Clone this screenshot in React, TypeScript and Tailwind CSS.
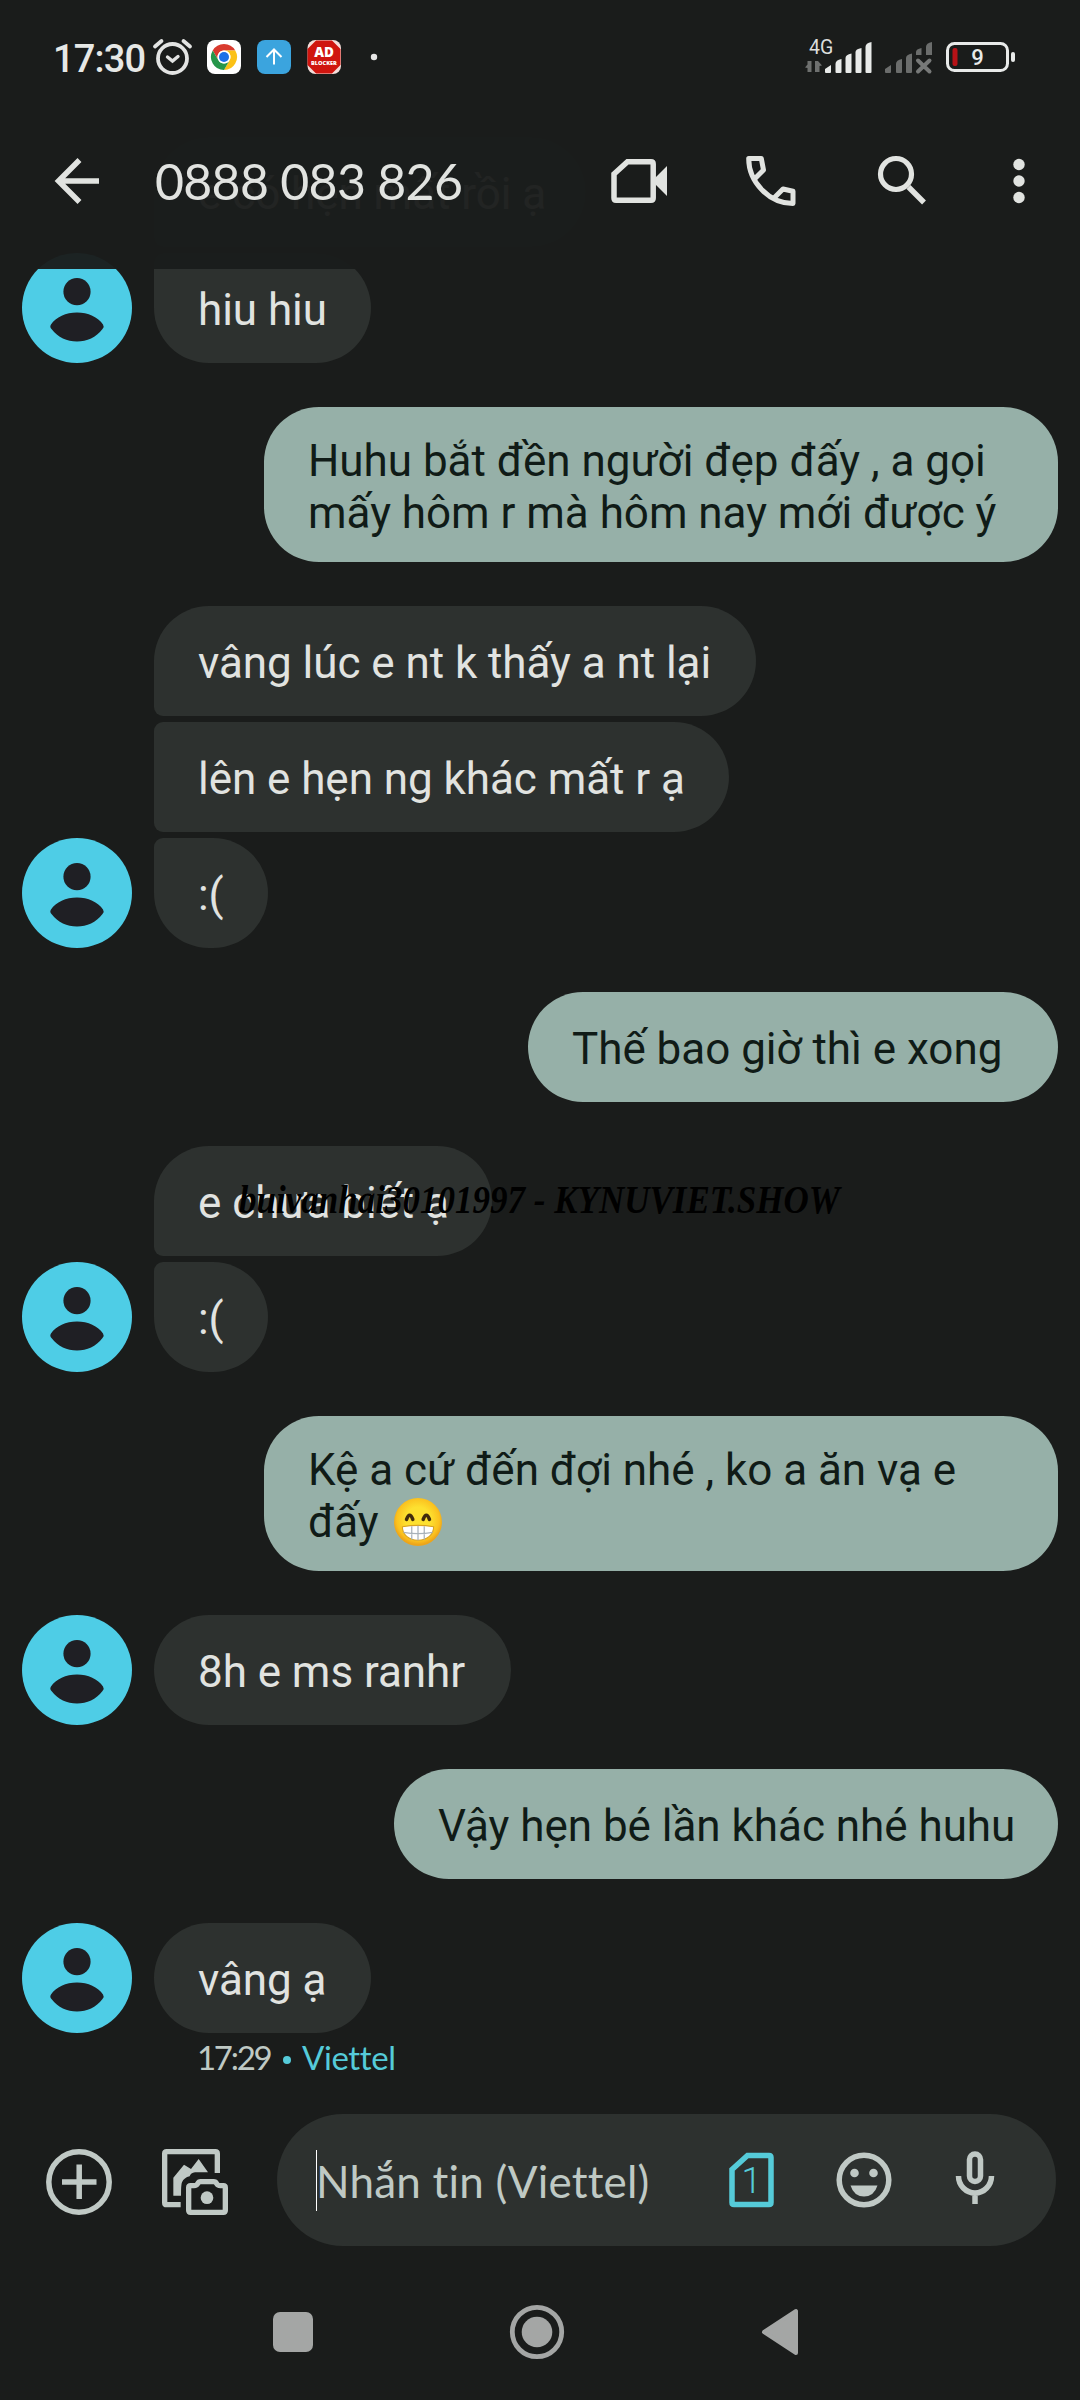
import React from "react";

type Corner = "single" | "first" | "middle" | "last";

const corners: Record<Corner, string> = {
  single: "rounded-[55px]",
  first: "rounded-[55px] rounded-bl-[9px]",
  middle: "rounded-[55px] rounded-l-[9px]",
  last: "rounded-[55px] rounded-tl-[9px]",
};

function Avatar() {
  return (
    <svg viewBox="0 0 110 110" className="size-[110px] shrink-0">
      <circle cx="55" cy="55" r="55" fill="#4ecde6" />
      <circle cx="55" cy="38.700" r="13.600" fill="#1f1f24" />
      <path
        d="M29 71.500C34 64 44 59.500 55 59.500S76 64 81 71.500Q82.600 73.800 80.500 76C74 84.500 65 88.500 55 88.500S36 84.500 29.500 76Q27.400 73.800 29 71.500Z"
        fill="#1f1f24"
      />
    </svg>
  );
}

function Received({ text, corner = "single", avatar = true, width }: { text: string; corner?: Corner; avatar?: boolean; width: string }) {
  return (
    <div className="flex h-[110px] gap-[22px] pl-[22px]">
      {avatar ? <Avatar /> : <div className="w-[110px] shrink-0" />}
      <div className={`${corners[corner]} ${width} bg-[#2d312f] pl-[44px] pt-[31px] text-[44px] leading-[52px] tracking-[-0.050px] whitespace-nowrap text-[#e1e3e0]`}>
        {text}
      </div>
    </div>
  );
}

function Sent({ children, size }: { children: React.ReactNode; size: string }) {
  return (
    <div className={`${size} ml-auto mr-[22px] rounded-[55px] bg-[#96b0a8] pl-[44px] text-[44px] leading-[52px] tracking-[-0.030px] whitespace-nowrap text-[#101b17]`}>
      {children}
    </div>
  );
}

function GrinEmoji() {
  return (
    <svg viewBox="0 0 48 48" className="ml-[3px] inline-block size-[50px] align-[-10px]">
      <defs>
        <radialGradient id="face" cx="50%" cy="45%" r="52%">
          <stop offset="0.5" stopColor="#fde030" />
          <stop offset="0.85" stopColor="#fbc21f" />
          <stop offset="1" stopColor="#eda51a" />
        </radialGradient>
      </defs>
      <circle cx="24" cy="24" r="23" fill="url(#face)" />
      <path d="M13 21.500Q16 13.500 19 21.500M29 21.500Q32 13.500 35 21.500" fill="none" stroke="#422b0d" strokeWidth="3.400" strokeLinecap="round" />
      <path d="M9 28.500Q24 26 39 28.500C39 36 33 41.500 24 41.500S9 36 9 28.500Z" fill="#fff" stroke="#d9a321" strokeWidth="1" />
      <path d="M10 34Q24 36.500 38 34M18 28V41M24 27.500V41.500M30 28V41" fill="none" stroke="#a9b2ba" strokeWidth="1.200" />
    </svg>
  );
}

function StatusBar() {
  return (
    <div className="flex h-[115px] items-start pl-[53px] pt-[30px]">
      <span className="mt-[6px] w-[92px] text-[38px] font-medium leading-[46px] tracking-[-0.800px] whitespace-nowrap text-[#e6e8e6]">17:30</span>
      <svg viewBox="0 0 240 60" className="h-[60px] w-[240px]">
        <g fill="none" stroke="#e3e4e3" strokeLinecap="round">
          <circle cx="27.500" cy="28.500" r="14.500" strokeWidth="3.800" />
          <path d="M10 16.500L16.500 11M45 16.500L38.500 11" strokeWidth="3.800" />
          <path d="M22.500 27L27.500 31L33 26.500" strokeWidth="3.400" />
        </g>
        <rect x="62" y="10" width="34" height="34" rx="8" fill="#fff" />
        <g transform="translate(79 27)">
          <path d="M-11.260 -6.500A13 13 0 0 1 11.260 -6.500H0A6.500 6.500 0 0 0 -5.630 3.250Z" fill="#d93a2e" />
          <path d="M11.260 -6.500A13 13 0 0 1 0 13L5.630 3.250A6.500 6.500 0 0 0 0 -6.500Z" fill="#fbc116" />
          <path d="M0 13A13 13 0 0 1 -11.260 -6.500L-5.630 3.250A6.500 6.500 0 0 0 5.630 3.250Z" fill="#26964a" />
          <circle r="6.400" fill="#fff" />
          <circle r="5" fill="#1b6fe8" />
        </g>
        <rect x="112" y="10" width="34" height="34" rx="8" fill="#3ba4de" />
        <path d="M129 34.500V21M121.500 27L129 19.500L136.500 27" fill="none" stroke="#fff" strokeWidth="2" />
        <rect x="162.500" y="10" width="33.500" height="34" rx="8" fill="#f3dedb" />
        <path d="M171 10.500H187L195.500 19V35L187 43.500H171L162.500 35V19Z" fill="#d0150f" />
        <circle cx="229" cy="27" r="3.200" fill="#e6e6e6" />
        <text x="179" y="26.500" textAnchor="middle" fontFamily="Open Sans" fontWeight="800" fontSize="13.500" fill="#fff">AD</text>
        <text x="179" y="34.500" textAnchor="middle" fontFamily="Open Sans" fontWeight="800" fontSize="5.600" fill="#fff">BLOCKER</text>
      </svg>
      <svg viewBox="0 0 230 60" className="ml-[410px] h-[60px] w-[230px]">
        <text x="14" y="24" fontFamily="Roboto" fontSize="19.500" fill="#dcdedc">4G</text>
        <path d="M16.500 31V42H12.500V38L10 37.500L12.500 34.500V31ZM20 42V31H23L27 35.500L24.500 36V42Z" fill="#6e706f" />
        <g fill="#e8eae9">
          <path d="M30 42V39L36 35V42Q36 43 35 43H31Q30 43 30 42Z" />
          <path d="M40.500 42V34Q40.500 30 46.500 29V42Q46.500 43 45.500 43H41.500Q40.500 43 40.500 42Z" />
          <path d="M50.500 42V28Q50.500 24.500 56.500 23.500V42Q56.500 43 55.500 43H51.500Q50.500 43 50.500 42Z" />
          <path d="M60.500 42V22Q60.500 19 66.500 18V42Q66.500 43 65.500 43H61.500Q60.500 43 60.500 42Z" />
          <path d="M70.500 42V17Q70.500 13 76.500 12V42Q76.500 43 75.500 43H71.500Q70.500 43 70.500 42Z" />
        </g>
        <g fill="#6b6d6c">
          <path d="M90 42V39L96 35V42Q96 43 95 43H91Q90 43 90 42Z" />
          <path d="M101 42V34Q101 30 107 29V42Q107 43 106 43H102Q101 43 101 42Z" />
          <path d="M111 42V28Q111 24.500 117 23.500V42Q117 43 116 43H112Q111 43 111 42Z" />
          <path d="M121 25V22Q121 19 126.500 18V25Z" />
          <path d="M131 25V17Q131 13 137 12V25Z" />
        </g>
        <path d="M123 30.500L134.500 41.500M134.500 30.500L123 41.500" stroke="#777978" strokeWidth="4" strokeLinecap="round" />
        <rect x="152.500" y="13.500" width="60" height="27" rx="7" fill="none" stroke="#e8eae9" strokeWidth="3" />
        <rect x="157.500" y="18" width="5" height="18" rx="2" fill="#b81217" />
        <rect x="216" y="22" width="4" height="10" rx="2" fill="#e8eae9" />
        <text x="182.500" y="35" textAnchor="middle" fontFamily="Roboto" fontWeight="500" fontSize="22" fill="#e8eae9">9</text>
      </svg>
    </div>
  );
}

function Header() {
  return (
    <header className="absolute inset-x-0 top-0 h-[269px] bg-[#1a1c1b]/96">
      <StatusBar />
      <div className="flex h-[132px] items-center pl-[50px]">
        <svg viewBox="0 0 54 54" className="size-[54px]" fill="none" stroke="#e1e3e0" strokeWidth="5.500">
          <path d="M49 27H9M29.500 6L8.500 27L29.500 48" />
        </svg>
        <h1 className="ml-[51px] w-[451px] font-['Lato'] text-[50px] leading-[60px] tracking-[-0.700px] whitespace-nowrap text-[#e1e3e0]">0888 083 826</h1>
        <div className="flex gap-[66px]">
          <svg viewBox="0 0 66 66" className="size-[66px]">
            <path d="M8 26L21.500 13.700H45Q47.200 13.700 47.200 16V50Q47.200 52.300 45 52.300H10Q8 52.300 8 50Z" fill="none" stroke="#e1e3e0" strokeWidth="5.500" />
            <path d="M49 30L61 18V48L49 36Z" fill="#e1e3e0" />
          </svg>
          <svg viewBox="0 0 66 66" className="size-[66px]" fill="none" stroke="#e1e3e0" strokeWidth="5" strokeLinejoin="round">
            <path d="M17 30.500L25.500 22L23.300 10.500H10.700C10.700 34 31 55.300 55 55.500V43.300L45 41L36.500 49.500" />
          </svg>
          <svg viewBox="0 0 66 66" className="size-[66px]" fill="none" stroke="#e1e3e0">
            <circle cx="26" cy="26" r="15.500" strokeWidth="5.200" />
            <path d="M38.500 39L54 54.500" strokeWidth="5.500" />
          </svg>
        </div>
        <svg viewBox="0 0 66 66" className="ml-[50px] size-[66px]" fill="#e1e3e0">
          <circle cx="33" cy="16.500" r="5.700" />
          <circle cx="33" cy="33" r="5.700" />
          <circle cx="33" cy="49.500" r="5.700" />
        </svg>
      </div>
    </header>
  );
}

function Composer() {
  return (
    <div className="mt-[37px] flex h-[132px] items-center pl-[44px]">
      <svg viewBox="0 0 70 70" className="mt-[4px] size-[70px]" fill="none" stroke="#c0c9c5">
        <circle cx="35" cy="35" r="30.200" strokeWidth="5.500" />
        <path d="M18 35H52.500M35.200 17.500V52" strokeWidth="5.500" />
      </svg>
      <svg viewBox="390 36 210 210" className="ml-[46px] mt-[4px] size-[70px]">
        <path d="M452 209H410Q404 209 404 203V56Q404 50 410 50H556Q562 50 562 56V114" fill="none" stroke="#c0c9c5" strokeWidth="16" />
        <path d="M430 182V128L462 89L483 102L506 72L534 112H495Q482 114 479 124Q462 128 456 142Q453 148 453 182Z" fill="#c0c9c5" />
        <path
          d="M476 158Q476 152 482 152H492Q500 152 503 146Q506 140 512 140H551Q557 140 560 146Q563 152 571 152H580Q586 152 586 158V226Q586 232 580 232H482Q476 232 476 226Z"
          fill="none"
          stroke="#c0c9c5"
          strokeWidth="16"
        />
        <circle cx="531" cy="188" r="19" fill="#c0c9c5" />
      </svg>
      <div className="ml-[47px] flex h-[132px] w-[779px] items-center rounded-full bg-[#2d312f] pl-[39px]">
        <div className="h-[61px] w-px bg-white" />
        <span className="-ml-px mt-px w-[399px] font-['Lato','Roboto',sans-serif] text-[44px] leading-[60px] tracking-[0.200px] whitespace-nowrap text-[#bfc9c4]">Nhắn tin (Viettel)</span>
        <svg viewBox="0 0 54 66" className="ml-[9px] h-[66px] w-[54px]">
          <path d="M8 22.500L23.500 8.500H45Q47 8.500 47 10.500V55.500Q47 57.500 45 57.500H10Q8 57.500 8 55.500Z" fill="none" stroke="#55cbd9" strokeWidth="5.500" />
          <text x="27.500" y="46" textAnchor="middle" fontFamily="Roboto" fontWeight="300" fontSize="36" fill="#55cbd9">1</text>
        </svg>
        <svg viewBox="0 0 66 66" className="ml-[53px] size-[66px]">
          <circle cx="33" cy="33" r="24.800" fill="none" stroke="#c0c9c5" strokeWidth="5.500" />
          <circle cx="23.500" cy="26" r="4.300" fill="#c0c9c5" />
          <circle cx="42.500" cy="26" r="4.300" fill="#c0c9c5" />
          <path d="M19.500 38.500H46.500Q43 49.500 33 49.500T19.500 38.500Z" fill="#c0c9c5" />
        </svg>
        <svg viewBox="0 0 66 66" className="ml-[45px] size-[66px]" fill="none" stroke="#c0c9c5" strokeWidth="5.500">
          <rect x="27.500" y="7" width="11" height="27.500" rx="5.500" />
          <path d="M16.500 29A16.500 17 0 0 0 49.500 29M33 45V57" />
        </svg>
      </div>
    </div>
  );
}

function NavBar() {
  return (
    <nav className="flex items-center pl-[273px] pt-[56px]">
      <div className="size-[40px] rounded-[7px] bg-[#a4a6a5]" />
      <svg viewBox="0 0 60 60" className="ml-[194px] size-[60px]">
        <circle cx="30" cy="30" r="24.700" fill="none" stroke="#a4a6a5" strokeWidth="4.800" />
        <circle cx="30" cy="30" r="15.300" fill="#a4a6a5" />
      </svg>
      <svg viewBox="0 0 40 60" className="ml-[193px] h-[60px] w-[40px]">
        <path d="M4 30L36 9V51Z" fill="#a4a6a5" stroke="#a4a6a5" strokeWidth="4" strokeLinejoin="round" />
      </svg>
    </nav>
  );
}

export default function App() {
  return (
    <div className="relative flex h-[2400px] w-[1080px] flex-col overflow-hidden bg-[#1a1c1b] font-['Roboto',sans-serif]">
      <main className="flex flex-col gap-[44px] pt-[137px]">
        <div className="flex flex-col gap-[6px]">
          <Received text="e có hẹn mất rồi ạ" corner="first" avatar={false} width="w-[432px]" />
          <Received text="hiu hiu" corner="last" width="w-[217px]" />
        </div>
        <Sent size="h-[155px] w-[794px] pt-[28px]">Huhu bắt đền người đẹp đấy , a gọi<br />mấy hôm r mà hôm nay mới được ý</Sent>
        <div className="flex flex-col gap-[6px]">
          <Received text="vâng lúc e nt k thấy a nt lại" corner="first" avatar={false} width="w-[602px]" />
          <Received text="lên e hẹn ng khác mất r ạ" corner="middle" avatar={false} width="w-[575px]" />
          <Received text=":(" corner="last" width="w-[114px]" />
        </div>
        <Sent size="h-[110px] w-[530px] pt-[31px]">Thế bao giờ thì e xong</Sent>
        <div className="flex flex-col gap-[6px]">
          <Received text="e chưa biết ạ" corner="first" avatar={false} width="w-[338px]" />
          <Received text=":(" corner="last" width="w-[114px]" />
        </div>
        <Sent size="h-[155px] w-[794px] pt-[28px]">Kệ a cứ đến đợi nhé , ko a ăn vạ e<br />đấy <GrinEmoji /></Sent>
        <Received text="8h e ms ranhr" width="w-[357px]" />
        <Sent size="h-[110px] w-[664px] pt-[31px]">Vậy hẹn bé lần khác nhé huhu</Sent>
        <Received text="vâng ạ" width="w-[217px]" />
      </main>
      <div className="mt-[4px] flex h-[40px] items-center pl-[197px] font-['Lato'] text-[33px] leading-[40px] text-[#bfc9c4]">
        <span className="w-[74px] tracking-[-2.300px]">17:29</span>
        <span className="ml-[12px] mt-[5px] size-[8px] rounded-full bg-[#55cbd9]" />
        <span className="ml-[11px] tracking-[-0.400px] text-[#55cbd9]">Viettel</span>
      </div>
      <Composer />
      <NavBar />
      <p className="absolute left-[239px] top-[1175px] origin-left scale-x-[0.854] font-['Liberation_Serif'] text-[41px] font-bold italic leading-[48px] whitespace-nowrap text-black">buivanhai30101997 - KYNUVIET.SHOW</p>
      <Header />
    </div>
  );
}
